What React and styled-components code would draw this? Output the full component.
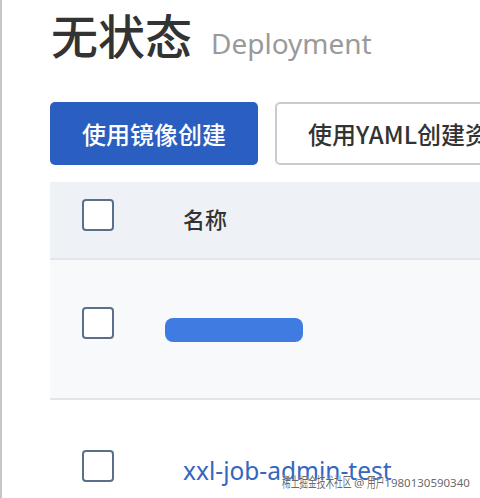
import React from "react";
import styled, { createGlobalStyle } from "styled-components";

const Global = createGlobalStyle`
  html, body { margin: 0; padding: 0; background: #fff; }
  body { font-family: "Noto Sans", "Noto Sans CJK SC", sans-serif; }
  #root { width: 480px; height: 498px; overflow: hidden; }
`;

const Page = styled.div`
  position: relative;
  width: 480px;
  height: 498px;
  overflow: hidden;
  box-sizing: border-box;
  border-left: 2px solid #c6c6c6;
  padding-left: 48px;
  background: #fff;
`;

const Header = styled.div`
  display: flex;
  align-items: baseline;
  gap: 19px;
  padding-top: 3px;
  height: 96px;
  box-sizing: border-box;
  white-space: nowrap;
`;

const Title = styled.h1`
  margin: 0 0 0 1px;
  font-family: "Noto Sans CJK SC", sans-serif;
  font-size: 47px;
  font-weight: 500;
  line-height: 62px;
  color: #333;
`;

const Subtitle = styled.span`
  font-family: "Noto Sans", "Noto Sans CJK SC", sans-serif;
  font-size: 28px;
  color: #9a9a9a;
`;

const Toolbar = styled.div`
  display: flex;
  gap: 17px;
  margin-top: 6px;
  white-space: nowrap;
`;

const Button = styled.button`
  flex: none;
  height: 63px;
  box-sizing: border-box;
  border-radius: 5px;
  font-family: "Noto Sans CJK SC", sans-serif;
  font-size: 24px;
  font-weight: 500;
  padding: 0 ${(p) => (p.$primary ? "32px" : "31px")};
  background: ${(p) => (p.$primary ? "#2a5fc1" : "#fff")};
  color: ${(p) => (p.$primary ? "#fff" : "#333")};
  border: ${(p) => (p.$primary ? "none" : "2px solid #cbcbcb")};
  width: ${(p) => (p.$primary ? "208px" : "auto")};
  text-align: left;
  cursor: pointer;
`;

const Table = styled.div`
  margin-top: 17px;
  width: 460px;
`;

const Row = styled.div`
  display: grid;
  grid-template-columns: 115px 1fr;
  align-items: center;
  height: ${(p) => p.$h}px;
  background: ${(p) => p.$bg};
  border-bottom: ${(p) => (p.$border ? "2px solid #e2e5e9" : "none")};
  box-sizing: border-box;
`;

const CheckCell = styled.div`
  padding-left: 32px;
  display: flex;
  align-items: center;
`;

const Checkbox = styled.span`
  display: block;
  width: 32px;
  height: 32px;
  box-sizing: border-box;
  border: 2px solid #5a6f8c;
  border-radius: 4px;
  background: #fff;
  margin-top: ${(p) => p.$offset || 0}px;
`;

const HeadText = styled.span`
  padding-left: 18px;
  font-family: "Noto Sans CJK SC", sans-serif;
  font-size: 22px;
  font-weight: 500;
  color: #333;
  margin-top: -4px;
`;

const Skeleton = styled.span`
  display: block;
  width: 138px;
  height: 24px;
  border-radius: 8px;
  background: #3f7be0;
  margin-top: 2px;
`;

const Link = styled.a`
  padding-left: 18px;
  font-family: "Noto Sans", sans-serif;
  font-size: 24.5px;
  color: #3566c0;
  text-decoration: none;
  white-space: nowrap;
  margin-top: 8px;
`;

const Watermark = styled.div`
  position: absolute;
  left: 280px;
  top: 472px;
  font-family: "Noto Sans", "Noto Sans CJK SC", sans-serif;
  font-size: 11.5px;
  line-height: 18px;
  color: rgba(85, 85, 85, 0.9);
  text-shadow: 0 0 2px rgba(255, 255, 255, 0.9);
  white-space: nowrap;
`;

const Squeeze = styled.span`
  display: inline-block;
  font-family: "Noto Sans CJK SC", sans-serif;
  font-size: 14px;
  transform: scaleX(0.62);
  transform-origin: left center;
  margin-right: ${(p) => p.$pull}px;
`;

export default function App() {
  return (
    <>
      <Global />
      <Page>
        <Header>
          <Title>无状态</Title>
          <Subtitle>Deployment</Subtitle>
        </Header>
        <Toolbar>
          <Button $primary>使用镜像创建</Button>
          <Button>使用YAML创建资源</Button>
        </Toolbar>
        <Table>
          <Row $h={78} $bg="#eef2f7" $border>
            <CheckCell>
              <Checkbox $offset={-10} />
            </CheckCell>
            <HeadText>名称</HeadText>
          </Row>
          <Row $h={140} $bg="#f7f9fb" $border>
            <CheckCell>
              <Checkbox $offset={-12} />
            </CheckCell>
            <Skeleton />
          </Row>
          <Row $h={132} $bg="#fff">
            <CheckCell>
              <Checkbox $offset={0} />
            </CheckCell>
            <Link href="#">xxl-job-admin-test</Link>
          </Row>
        </Table>
        <Watermark>
          <Squeeze $pull={-43}>稀土掘金技术社区</Squeeze> @{" "}
          <Squeeze $pull={-11}>用户</Squeeze>1980130590340
        </Watermark>
      </Page>
    </>
  );
}
